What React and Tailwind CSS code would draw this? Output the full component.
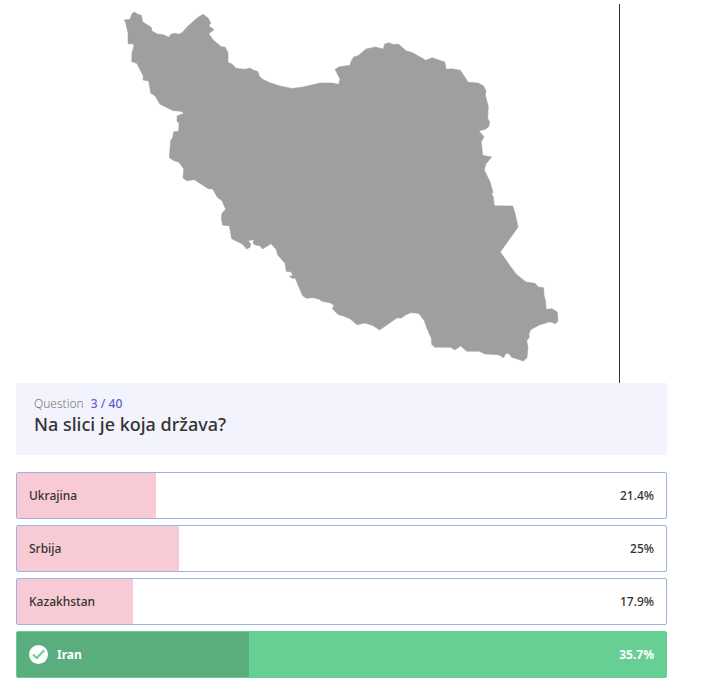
import React from "react";

const answers = [
  { label: "Ukrajina", percent: 21.4, correct: false },
  { label: "Srbija", percent: 25, correct: false },
  { label: "Kazakhstan", percent: 17.9, correct: false },
  { label: "Iran", percent: 35.7, correct: true },
];

const outline =
  "M124 20 130 19.3 132 13.5 134.7 12 137.3 14 141.3 15.3 142.7 22 151.3 27.3 152 31 157.3 34 163.3 34.7 169 37.3 170.7 34.3 175 33.3 178.7 34.3 182 32.7 187.3 26.7 197.3 17.7 203.3 14.3 208 18 210.7 22.7 209 26 214 29.7 208.7 33.7 213.3 40 221.3 46.7 225 47 228 52.7 228 62.3 232 64 236 68.3 245 69.3 250 68 253.3 70 258 71.7 259.3 76 262.7 79.3 270 82.7 280 86 292 88.5 303 87 320 83 331.7 83 338.7 84.3 340 79 335 69.3 339.3 66.7 350 65.3 351.3 60.7 354 56.7 358 55.7 366 49 375.3 47 383.3 49 384.7 44 389 42.7 392.7 44.3 398.7 44.3 406 50.7 412.7 52.7 425.7 60.3 432 57.7 444.7 62 446.3 69.3 451.7 68.7 460.3 70.3 468.3 82.3 478.3 83 483.3 85.7 486 90.7 485.3 95 488.3 106.7 487.7 118.3 489.7 122.3 488.7 126.7 485.3 129.3 479 131 484 136.7 481.3 141.7 482.7 155.3 491.7 157 485.7 164.3 484.3 170 490 181.7 493 192.3 491.7 194 493.3 196.7 494.3 205.7 512.7 206 515 213 518 227 516 230 500.3 252 510 265.7 516 274 526 282 535 283.3 538.3 287 543.7 287.7 544 295 545.7 301.7 546 309.3 552 308.7 557.3 312 558 320.7 555.7 323.7 550 321.7 539.3 325 530.7 329.7 529 334 529.3 337.3 526.7 341 528 346.7 527 357.7 523.3 361 511.7 357.3 508.3 353.3 505.3 354 503.7 357.7 498.3 354.7 485 354 479.3 351.3 466.7 351.3 460.7 346 454.7 350 450.7 347.3 434.7 347.3 431.7 344.3 431.3 338.3 426.7 327.7 424.3 320.7 419.3 314 416 313 410.7 312.7 406 314.7 401.3 318 396.7 318 379.7 330 372.3 325.3 364.7 323 357 324.7 350 318.7 343.3 316 338.3 314.7 332.3 308.7 334 305.3 330 302.7 322 301.3 319.3 299.3 313.3 297.7 306.3 298.3 302.7 295.7 298.7 286.7 295.3 278.3 292 278.3 289.3 276 292.7 276 291.3 272 286.3 271.3 285 263.3 277.7 255 276 249.3 271 243.7 262.7 249 259.7 245.7 256 245.3 253 243.3 254 239.7 248 240.7 250.7 244 250 247.3 246.7 249 242.7 244.3 231.7 238.7 229.3 225.7 222.7 225.3 221.3 218.3 222 213.3 225.7 209.3 222 200.7 217.3 197.3 212.7 189 208.3 188.7 194.3 179.7 186.7 180.7 183 178 183.7 169 179 162.3 174 160.7 169.3 157.7 170.7 140 172.7 137.7 173.7 131.7 178.7 131.3 179 122.7 177 121.7 177 116 184 113.3 181 111.3 173.3 110.7 160 104.3 155 95.7 150.7 93.3 148.7 81 143 80 143.3 76 136.7 63.3 131.7 61.7 132 52.7 134 45.7 133.3 44 128 43.7 128 33.3 125.7 22.7Z";

function CountryMap() {
  return (
    <figure className="mr-[47px] border-r border-[#333333]">
      <svg viewBox="16 4 603 379" className="block w-full" role="img" aria-label="Na slici je koja država?">
        <path d={outline} fill="#a09e9f" stroke="#a09e9f" strokeWidth="0.5" strokeLinejoin="round" />
      </svg>
    </figure>
  );
}

function CheckBadge() {
  return (
    <svg viewBox="0 0 19 19" className="mr-[9px] h-[19px] w-[19px]" aria-hidden="true">
      <circle cx="9.5" cy="9.5" r="9.5" fill="#ffffff" />
      <path d="M4 9.5 7.7 13 15.2 5.3" fill="none" stroke="#67cf94" strokeWidth="2" />
    </svg>
  );
}

function Answer({ label, percent, correct }) {
  return (
    <li
      className={
        correct
          ? "relative h-[47px] rounded-xs border border-[#67cf94] bg-[#67cf94] font-bold text-white"
          : "relative h-[47px] rounded-xs border border-[#9bb1ea] bg-white font-medium text-[#333333]"
      }
    >
      <div
        className={correct ? "absolute inset-y-0 left-0 bg-[#5aad7d]" : "absolute inset-y-0 left-0 bg-[#f8cad3]"}
        style={{ width: `${percent}%` }}
      />
      <div className="relative flex h-full items-center px-3 text-[12px] leading-4">
        {correct && <CheckBadge />}
        <span>{label}</span>
        <span className="ml-auto">{percent}%</span>
      </div>
    </li>
  );
}

export default function App() {
  return (
    <main className="mr-[59px] ml-4 pt-1 font-['Noto_Sans',sans-serif]">
      <CountryMap />
      <header className="bg-[#f3f3fd] px-[18px] pt-3 pb-5">
        <p className="text-[12px] leading-[18px] font-light text-[#777777]">
          Question <span className="ml-1 font-medium text-[#5f5fd3]">3 / 40</span>
        </p>
        <h1 className="text-[18px] leading-[22px] font-medium text-[#333333]">Na slici je koja država?</h1>
      </header>
      <ul className="mt-[17px] flex flex-col gap-[6px]">
        {answers.map((answer) => (
          <Answer key={answer.label} {...answer} />
        ))}
      </ul>
    </main>
  );
}
